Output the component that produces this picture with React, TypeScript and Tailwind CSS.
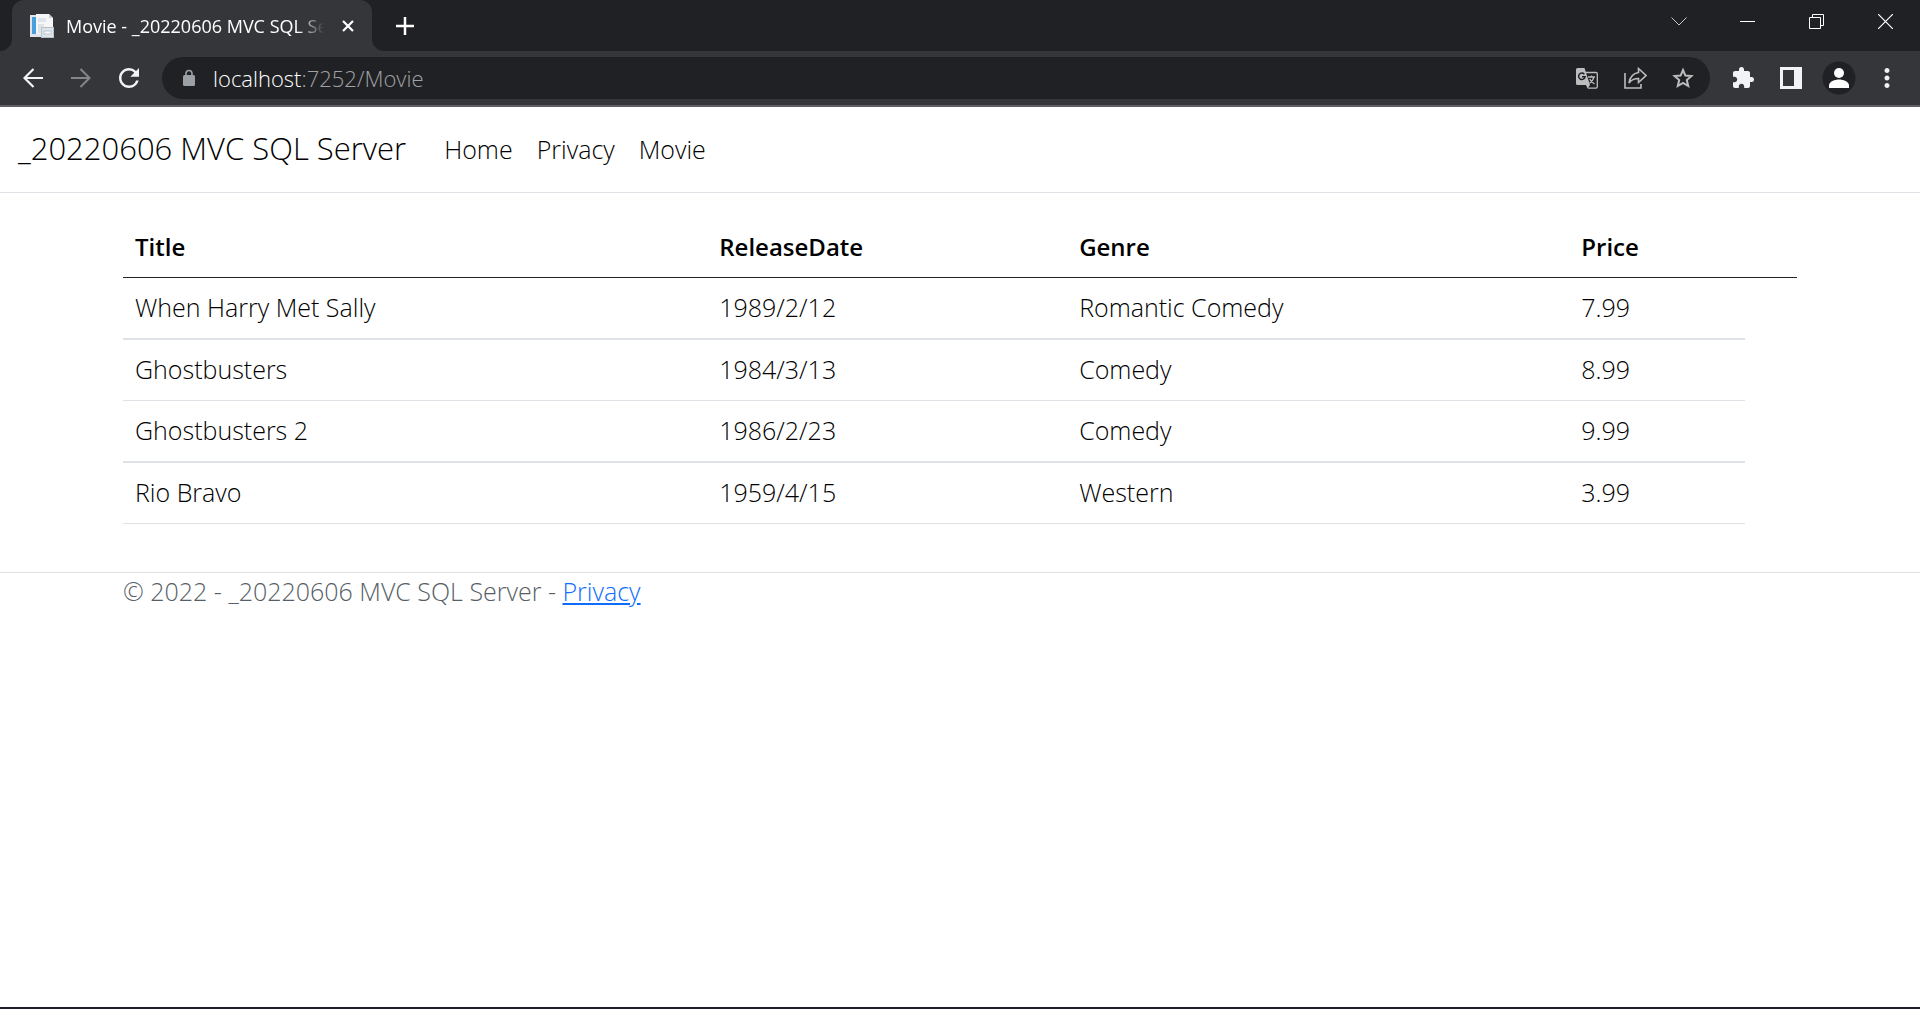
import type { ReactNode } from "react";
import { MdExtension, MdMoreVert, MdRefresh } from "react-icons/md";

const movies = [
  { title: "When Harry Met Sally", date: "1989/2/12", genre: "Romantic Comedy", price: "7.99" },
  { title: "Ghostbusters", date: "1984/3/13", genre: "Comedy", price: "8.99" },
  { title: "Ghostbusters 2", date: "1986/2/23", genre: "Comedy", price: "9.99" },
  { title: "Rio Bravo", date: "1959/4/15", genre: "Western", price: "3.99" },
];

function IconButton({ label, className = "w-12", children }: { label: string; className?: string; children: ReactNode }) {
  return (
    <button type="button" aria-label={label} className={`flex h-10 shrink-0 items-center justify-center ${className}`}>
      {children}
    </button>
  );
}

function Favicon() {
  return (
    <svg width="24" height="24" viewBox="0 0 24 24" className="shrink-0" aria-hidden="true">
      <rect x="0" y="1" width="14" height="22" fill="#dfe5ea" />
      <rect x="2" y="3" width="4" height="17" fill="#4a9fdb" />
      <path d="M6 0h13l4 4v16H6z" fill="#f4f6f7" />
      <path d="M19 0v4h4z" fill="#c3ccd3" />
      <path d="M8 4h8v4H8zM8 10h6v9H8z" fill="#dfe4e8" />
      <rect x="11" y="13" width="13" height="11" fill="#dde4ea" />
      <path d="M11.500 13.500h12v10h-12z" fill="none" stroke="#b6c1ca" />
      <rect x="14" y="17" width="7" height="3" fill="#f8fafb" stroke="#bcc8d1" strokeWidth="1" />
    </svg>
  );
}

function TabStrip() {
  return (
    <div className="flex h-[51px] items-stretch bg-[#202124] text-white">
      <div className="relative ml-3 flex w-[360px] items-center rounded-t-xl bg-[#35363a] pl-[18px]">
        <svg width="12" height="12" className="absolute bottom-0 -left-3" aria-hidden="true">
          <path d="M12 0v12H0A12 12 0 0 0 12 0z" fill="#35363a" />
        </svg>
        <svg width="12" height="12" className="absolute -right-3 bottom-0" aria-hidden="true">
          <path d="M0 0v12h12A12 12 0 0 1 0 0z" fill="#35363a" />
        </svg>
        <Favicon />
        <span className="ml-3 flex-1 overflow-hidden whitespace-nowrap text-lg [mask-image:linear-gradient(to_right,black_90%,transparent)]">
          Movie - _20220606 MVC SQL Server
        </span>
        <IconButton label="Close tab">
          <svg width="12" height="12" viewBox="0 0 12 12" stroke="currentColor" strokeWidth="2.200" aria-hidden="true">
            <path d="M1 1l10 10M11 1L1 11" />
          </svg>
        </IconButton>
      </div>
      <div className="flex flex-1 items-center pl-[9px]">
        <IconButton label="New tab">
          <svg width="18" height="18" viewBox="0 0 18 18" stroke="currentColor" strokeWidth="2.500" aria-hidden="true">
            <path d="M9 0v18M0 9h18" />
          </svg>
        </IconButton>
      </div>
      <div className="flex h-[43px] items-center">
        <IconButton label="Search tabs" className="w-[69px]">
          <svg width="16" height="9" viewBox="0 0 16 9" fill="none" stroke="#c8c9ca" aria-hidden="true">
            <path d="M.5.5L8 8L15.500.5" />
          </svg>
        </IconButton>
        <IconButton label="Minimize" className="w-[69px]">
          <svg width="15" height="1" aria-hidden="true">
            <rect width="15" height="1" fill="white" />
          </svg>
        </IconButton>
        <IconButton label="Restore" className="w-[69px]">
          <svg width="15" height="15" viewBox="0 0 15 15" fill="none" stroke="white" aria-hidden="true">
            <path d="M.5 3.500h11v11H.5zM3.500 3.500v-3h11v11h-3" />
          </svg>
        </IconButton>
        <IconButton label="Close" className="w-[69px]">
          <svg width="15" height="15" viewBox="0 0 15 15" fill="none" stroke="white" strokeWidth="1.200" aria-hidden="true">
            <path d="M0 0l15 15M15 0L0 15" />
          </svg>
        </IconButton>
      </div>
    </div>
  );
}

function Toolbar() {
  return (
    <div className="flex h-14 items-center border-b-2 border-[#5f6064] bg-[#35363a] px-[9px] text-[#f1f3f4]">
      <IconButton label="Back">
        <svg width="20" height="20" viewBox="0 0 20 20" fill="none" stroke="currentColor" strokeWidth="2.200" aria-hidden="true">
          <path d="M20 10H2M10.500 1L1.500 10l9 9" />
        </svg>
      </IconButton>
      <IconButton label="Forward">
        <svg width="20" height="20" viewBox="0 0 20 20" fill="none" stroke="#85868a" strokeWidth="2" aria-hidden="true">
          <path d="M0 10h18M9.500 1l9 9l-9 9" />
        </svg>
      </IconButton>
      <IconButton label="Reload">
        <MdRefresh size={30} />
      </IconButton>
      <div className="mx-[9px] flex h-[42px] flex-1 items-center rounded-full bg-[#202124] pr-[3px] pl-[18px]">
        <svg width="14" height="18" viewBox="0 0 14 18" className="mx-0.5 shrink-0" aria-hidden="true">
          <rect x="1" y="6" width="12" height="11" rx="1.500" fill="#9aa0a6" />
          <path d="M4 7V4.500a3 3 0 0 1 6 0V7" fill="none" stroke="#9aa0a6" strokeWidth="1.600" />
        </svg>
        <a href="#url" className="ml-[15px] flex-1 text-[22px] font-light text-[#a0a2a6]">
          <span className="text-white">localhost</span>:7252/Movie
        </a>
        <div className="flex text-[#bdbdbe]">
          <IconButton label="Translate this page">
            <svg width="22" height="21" viewBox="0 0 22 21" aria-hidden="true">
              <path d="M9 4.500h11a1.300 1.300 0 0 1 1.300 1.300v13a1.300 1.300 0 0 1-1.300 1.300h-8" fill="none" stroke="currentColor" strokeWidth="1.300" />
              <path d="M1.500 0h7l5.500 17H1.500A1.500 1.500 0 0 1 0 15.500v-14A1.500 1.500 0 0 1 1.500 0zM10 17h4l-2.500 3.500z" fill="currentColor" />
              <path d="M8.300 6.200A3.200 3.200 0 1 0 9 8.800H6" fill="none" stroke="#202124" strokeWidth="1.500" />
              <path d="M12 9h7M15.500 7.500V9M17.800 9c-.5 3-2.300 5-4.300 6.300M13.800 11c.8 2 2.500 3.800 4.700 5" fill="none" stroke="currentColor" strokeWidth="1.300" />
            </svg>
          </IconButton>
          <IconButton label="Share">
            <svg width="23" height="22" viewBox="0 0 23 22" fill="none" stroke="currentColor" strokeWidth="1.600" aria-hidden="true">
              <path d="M1 6v15h16v-4" />
              <path d="M14.500 1.500l7.500 7l-7.500 7v-4c-4 0-7 1-9.500 4.500c.7-5 3.700-9.500 9.500-10.500z" strokeLinejoin="miter" />
            </svg>
          </IconButton>
          <IconButton label="Bookmark this tab">
            <svg width="22" height="22" viewBox="0 0 22 22" fill="none" stroke="currentColor" strokeWidth="2" aria-hidden="true">
              <path d="M11 3l2.400 5.600 6 .5-4.600 4 1.400 5.900-5.200-3.100L5.800 19l1.400-5.900-4.600-4 6-.5z" />
            </svg>
          </IconButton>
        </div>
      </div>
      <IconButton label="Extensions">
        <MdExtension size={24} />
      </IconButton>
      <IconButton label="Side panel">
        <svg width="22" height="22" viewBox="0 0 22 22" aria-hidden="true">
          <path d="M0 0h22v22H0zM3 3v16h11V3z" fill="currentColor" fillRule="evenodd" />
        </svg>
      </IconButton>
      <IconButton label="Profile">
        <svg width="34" height="34" viewBox="0 0 34 34" aria-hidden="true">
          <circle cx="17" cy="17" r="16.500" fill="#202124" />
          <circle cx="17" cy="12" r="5" fill="white" />
          <path d="M7 27v-2.500c0-4 6-6 10-6s10 2 10 6V27z" fill="white" />
        </svg>
      </IconButton>
      <IconButton label="Menu">
        <MdMoreVert size={30} />
      </IconButton>
    </div>
  );
}

function SiteHeader() {
  return (
    <header className="mb-6 flex h-[86px] items-center border-b border-[#dee2e6] px-[18px] pb-0.5">
      <a href="#home" className="mr-[26px] text-[31px] leading-[45px]">
        _20220606 MVC SQL Server
      </a>
      <nav className="flex">
        <a href="#home" className="px-3">Home</a>
        <a href="#privacy" className="px-3">Privacy</a>
        <a href="#movie" className="px-3">Movie</a>
      </nav>
    </header>
  );
}

function MovieTable() {
  return (
    <table className="w-full table-fixed border-collapse text-left">
      <colgroup>
        <col className="w-[34.9%]" />
        <col className="w-[21.5%]" />
        <col className="w-[30%]" />
        <col className="w-[10.500%]" />
        <col />
      </colgroup>
      <thead className="text-2xl leading-9">
        <tr className="border-b border-[#212529]">
          <th scope="col" className="p-3 font-semibold">Title</th>
          <th scope="col" className="p-3 font-semibold">ReleaseDate</th>
          <th scope="col" className="p-3 font-semibold">Genre</th>
          <th scope="col" className="p-3 font-semibold">Price</th>
          <th />
        </tr>
      </thead>
      <tbody className="text-black">
        {movies.map((m) => (
          <tr key={m.title} className="*:border-b *:border-[#dee2e6] *:px-3 *:pt-[11px] *:pb-[13px] odd:*:border-b-2 last:*:border-b">
            <td>{m.title}</td>
            <td>{m.date}</td>
            <td>{m.genre}</td>
            <td>{m.price}</td>
          </tr>
        ))}
      </tbody>
    </table>
  );
}

export default function App() {
  return (
    <div className="flex min-h-screen flex-col border-b-2 border-[#1d1f2b] bg-white font-['Open_Sans','Noto_Sans',sans-serif]">
      <TabStrip />
      <Toolbar />
      <div className="text-[25px] leading-9 font-light text-black">
        <SiteHeader />
        <main className="mx-auto w-full max-w-[1710px] px-[18px] pb-12">
          <MovieTable />
        </main>
        <footer className="border-t border-[#dee2e6] text-[#565e66]">
          <div className="mx-auto max-w-[1710px] px-[18px]">
            © 2022 - _20220606 MVC SQL Server -{" "}
            <a href="#privacy" className="text-[#0d6efd] underline">Privacy</a>
          </div>
        </footer>
      </div>
    </div>
  );
}
